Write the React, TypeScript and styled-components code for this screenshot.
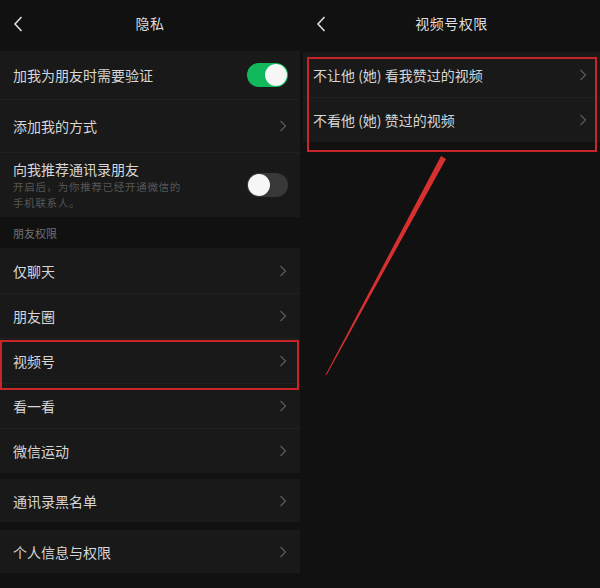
import styled, { createGlobalStyle } from 'styled-components'

const GlobalStyle = createGlobalStyle`
  html, body {
    margin: 0;
    padding: 0;
    background: #111111;
  }
  body {
    font-family: "Noto Sans CJK SC", "Noto Sans", sans-serif;
  }
`

const Page = styled.div`
  position: relative;
  display: flex;
  width: 600px;
  height: 588px;
  overflow: hidden;
  background: #111111;
`

const Panel = styled.section<{ $gapLeft?: number }>`
  width: ${p => 300 - (p.$gapLeft || 0)}px;
  margin-left: ${p => p.$gapLeft || 0}px;
  display: flex;
  flex-direction: column;
`

const Header = styled.header`
  position: relative;
  height: 50px;
  display: flex;
  align-items: center;
  justify-content: center;
  flex-shrink: 0;
`

const BackButton = styled.div`
  position: absolute;
  left: 12px;
  top: 15px;
  width: 12px;
  height: 18px;
  display: flex;
`

const Title = styled.h1`
  margin: 0;
  font-size: 14px;
  font-weight: 400;
  color: #dedede;
  letter-spacing: 0.5px;
  margin-top: -4px;
`

const Group = styled.div<{ $top?: number }>`
  margin-top: ${p => p.$top || 0}px;
  background: #191919;
  display: flex;
  flex-direction: column;
`

const Row = styled.div<{ $h: number; $line?: boolean; $pad?: number }>`
  height: ${p => p.$h}px;
  display: flex;
  align-items: center;
  justify-content: space-between;
  padding: 0 13px 0 ${p => p.$pad ?? 13}px;
  box-sizing: border-box;
  border-top: ${p => (p.$line ? '1px solid #202020' : 'none')};
`

const Label = styled.div`
  font-size: 14px;
  line-height: 20px;
  color: #d6d6d6;
  white-space: nowrap;
`

const LabelBlock = styled.div`
  display: flex;
  flex-direction: column;
  margin-top: -1px;
`

const SubText = styled.div`
  font-size: 10.5px;
  letter-spacing: 0.7px;
  line-height: 15.5px;
  color: #565656;
  white-space: nowrap;
`

const SectionLabel = styled.div`
  height: 30px;
  padding: 0 13px;
  display: flex;
  align-items: center;
  font-size: 11px;
  color: #707070;
  margin-top: 1px;
`

const Track = styled.div<{ $on: boolean }>`
  width: 41px;
  height: 24px;
  border-radius: 12px;
  background: ${p => (p.$on ? '#12b85c' : '#383838')};
  display: flex;
  align-items: center;
  justify-content: ${p => (p.$on ? 'flex-end' : 'flex-start')};
  padding: 0 1px;
  box-sizing: border-box;
  margin-right: -1px;
`

const Knob = styled.div`
  width: 22px;
  height: 22px;
  border-radius: 50%;
  background: #f6f6f6;
`

const Overlay = styled.svg`
  position: absolute;
  left: 0;
  top: 0;
  pointer-events: none;
`

const Chevron = () => (
  <svg width="8" height="12" viewBox="0 0 8 12">
    <path d="M1.5 1 L6.5 6 L1.5 11" fill="none" stroke="#595959" strokeWidth="1.3" />
  </svg>
)

const Back = () => (
  <BackButton>
    <svg width="12" height="18" viewBox="0 0 12 18">
      <path d="M9.5 2 L3 9 L9.5 16" fill="none" stroke="#dcdcdc" strokeWidth="1.6" />
    </svg>
  </BackButton>
)

const Switch = ({ on }: { on: boolean }) => (
  <Track $on={on}>
    <Knob />
  </Track>
)

const friendRows = ['仅聊天', '朋友圈', '视频号', '看一看', '微信运动']

export default function App() {
  return (
    <>
      <GlobalStyle />
      <Page>
        <Panel>
          <Header>
            <Back />
            <Title>隐私</Title>
          </Header>
          <Group $top={1}>
            <Row $h={48}>
              <Label>加我为朋友时需要验证</Label>
              <Switch on />
            </Row>
            <Row $h={53} $line>
              <Label>添加我的方式</Label>
              <Chevron />
            </Row>
            <Row $h={65} $line>
              <LabelBlock>
                <Label>向我推荐通讯录朋友</Label>
                <SubText>开启后，为你推荐已经开通微信的</SubText>
                <SubText>手机联系人。</SubText>
              </LabelBlock>
              <Switch on={false} />
            </Row>
          </Group>
          <SectionLabel>朋友权限</SectionLabel>
          <Group>
            {friendRows.map((label, i) => (
              <Row key={label} $h={45} $line={i > 0}>
                <Label>{label}</Label>
                <Chevron />
              </Row>
            ))}
          </Group>
          <Group $top={6}>
            <Row $h={43}>
              <Label>通讯录黑名单</Label>
              <Chevron />
            </Row>
          </Group>
          <Group $top={8}>
            <Row $h={43}>
              <Label>个人信息与权限</Label>
              <Chevron />
            </Row>
          </Group>
        </Panel>
        <Panel $gapLeft={3}>
          <Header>
            <Back />
            <Title>视频号权限</Title>
          </Header>
          <Group $top={2}>
            <Row $h={45} $pad={10}>
              <Label>不让他 (她) 看我赞过的视频</Label>
              <Chevron />
            </Row>
            <Row $h={45} $line $pad={10}>
              <Label>不看他 (她) 赞过的视频</Label>
              <Chevron />
            </Row>
          </Group>
        </Panel>
        <Overlay width="600" height="588" viewBox="0 0 600 588">
          <rect x="1" y="341" width="297" height="48" fill="none" stroke="#c8252a" strokeWidth="2" />
          <rect x="308" y="58" width="288" height="93" fill="none" stroke="#c8252a" strokeWidth="2" />
          <polygon points="441,156 446,159 326.5,375 325.5,375" fill="#d6302f" />
        </Overlay>
      </Page>
    </>
  )
}
